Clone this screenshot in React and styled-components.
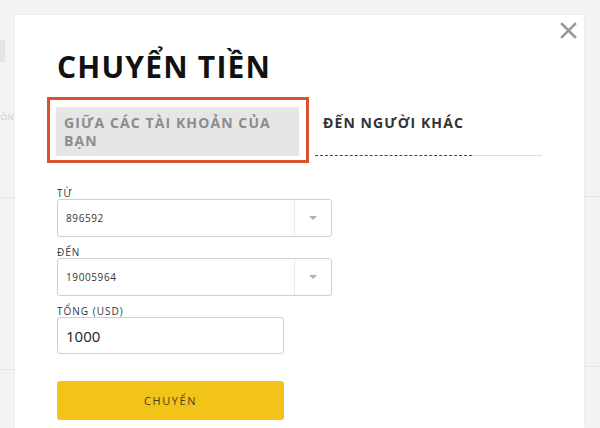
import React from 'react'
import styled, { createGlobalStyle } from 'styled-components';

export default function App() {
    return (
        <>
            <GlobalStyle />
            <Page>
                <Rail>
                    <RailTab />
                    <RailLabel>ÔN</RailLabel>
                    <RailRule gap={73} />
                    <RailRule gap={171} />
                </Rail>
                <Modal>
                    <CloseButton aria-label="close">
                        <svg width="17" height="17" viewBox="0 0 17 17">
                            <path d="M2 2 L15 15 M15 2 L2 15" stroke="#9a9a9a" strokeWidth="2.6" strokeLinecap="square" />
                        </svg>
                    </CloseButton>
                    <Title>CHUYỂN TIỀN</Title>
                    <TabList>
                        <Tab active>
                            GIỮA CÁC TÀI KHOẢN CỦA BẠN
                            <Highlight />
                        </Tab>
                        <Tab>ĐẾN NGƯỜI KHÁC</Tab>
                        <TabFiller />
                    </TabList>
                    <Form>
                        <Field>
                            <Label>TỪ</Label>
                            <Select>
                                <SelectValue>896592</SelectValue>
                                <SelectArrow><Caret /></SelectArrow>
                            </Select>
                        </Field>
                        <Field>
                            <Label>ĐẾN</Label>
                            <Select>
                                <SelectValue>19005964</SelectValue>
                                <SelectArrow><Caret /></SelectArrow>
                            </Select>
                        </Field>
                        <Field>
                            <Label>TỔNG (USD)</Label>
                            <AmountInput defaultValue="1000" />
                        </Field>
                        <SubmitButton>CHUYỂN</SubmitButton>
                    </Form>
                </Modal>
                <Rail right>
                    <RailRule gap={196} />
                    <RailRule gap={169} />
                </Rail>
            </Page>
        </>
    )
}

const GlobalStyle = createGlobalStyle`
body {
    margin: 0;
    font-family: "Open Sans", "Noto Sans", sans-serif;
    background: #f3f3f3;
}
`;

const Page = styled.div`
display: flex;
height: 428px;
overflow: hidden;
background-color: #f3f3f3;
`;

const Rail = styled.div`
display: flex;
flex-direction: column;
width: ${p => p.right ? 'auto' : '15px'};
flex: ${p => p.right ? 1 : 'none'};
overflow: hidden;
`;

const RailTab = styled.div`
margin-top: 40px;
width: 5px;
height: 22px;
background: #e3e3e3;
`;

const RailLabel = styled.div`
margin-top: 48px;
font-size: 9px;
font-weight: 600;
line-height: 14px;
color: #d6d6d6;
white-space: nowrap;
`;

const RailRule = styled.div`
margin-top: ${p => p.gap}px;
border-top: 1px solid #e6e6e6;
`;

const Modal = styled.div`
position: relative;
width: 569px;
margin-top: 15px;
padding: 34px 42px 0;
box-sizing: border-box;
background: #fff;
box-shadow: 0 0 2px rgba(0, 0, 0, 0.06);
`;

const CloseButton = styled.button`
position: absolute;
top: 7px;
right: 7px;
padding: 0;
border: none;
background: none;
display: flex;
`;

const Title = styled.h1`
margin: 0;
font-size: 30px;
line-height: 36px;
font-weight: 700;
letter-spacing: 1.2px;
color: #111;
`;

const TabList = styled.div`
display: flex;
margin-top: 22px;
margin-left: -1px;
`;

const Tab = styled.div`
position: relative;
box-sizing: border-box;
width: ${p => p.active ? '243px' : '157px'};
margin-right: ${p => p.active ? '16px' : '0'};
padding: ${p => p.active ? '7px 8px 6px' : '7px 8px 0'};
font-size: 14px;
line-height: 18px;
font-weight: 700;
letter-spacing: 1.1px;
white-space: ${p => p.active ? 'normal' : 'nowrap'};
color: ${p => p.active ? '#8c8c8c' : '#333'};
background: ${p => p.active ? '#e6e6e6' : 'transparent'};
border-bottom: ${p => p.active ? 'none' : '1px dashed #444'};
`;

const Highlight = styled.span`
position: absolute;
top: -10px;
left: -9px;
right: -10px;
bottom: -7px;
border: 3px solid #d9522b;
`;

const TabFiller = styled.div`
flex: 1;
border-bottom: 1px solid #dedede;
`;

const Form = styled.div`
display: flex;
flex-direction: column;
align-items: flex-start;
margin-top: 32px;
`;

const Field = styled.div`
display: flex;
flex-direction: column;
margin-bottom: 10px;
`;

const Label = styled.label`
font-size: 10px;
line-height: 11px;
letter-spacing: 1px;
color: #333;
`;

const Select = styled.div`
display: flex;
box-sizing: border-box;
width: 275px;
height: 38px;
border: 1px solid #cfcfcf;
border-radius: 3px;
`;

const SelectValue = styled.div`
flex: 1;
display: flex;
align-items: center;
padding-left: 8px;
font-size: 10px;
letter-spacing: 0.6px;
color: #333;
`;

const SelectArrow = styled.div`
width: 36px;
display: flex;
align-items: center;
justify-content: center;
border-left: 1px solid #ebebeb;
`;

const Caret = styled.span`
width: 0;
height: 0;
border-left: 4px solid transparent;
border-right: 4px solid transparent;
border-top: 4px solid #b0b0b0;
`;

const AmountInput = styled.input`
box-sizing: border-box;
width: 227px;
height: 37px;
padding: 0 8px;
border: 1px solid #cfcfcf;
border-radius: 3px;
font-family: "Open Sans", sans-serif;
font-size: 15px;
color: #222;
outline: none;
`;

const SubmitButton = styled.button`
width: 227px;
height: 39px;
margin-top: 17px;
border: none;
border-radius: 3px;
background: #f2c41a;
font-family: "Open Sans", sans-serif;
font-size: 11px;
letter-spacing: 1.6px;
color: #4a3f1e;
`;
